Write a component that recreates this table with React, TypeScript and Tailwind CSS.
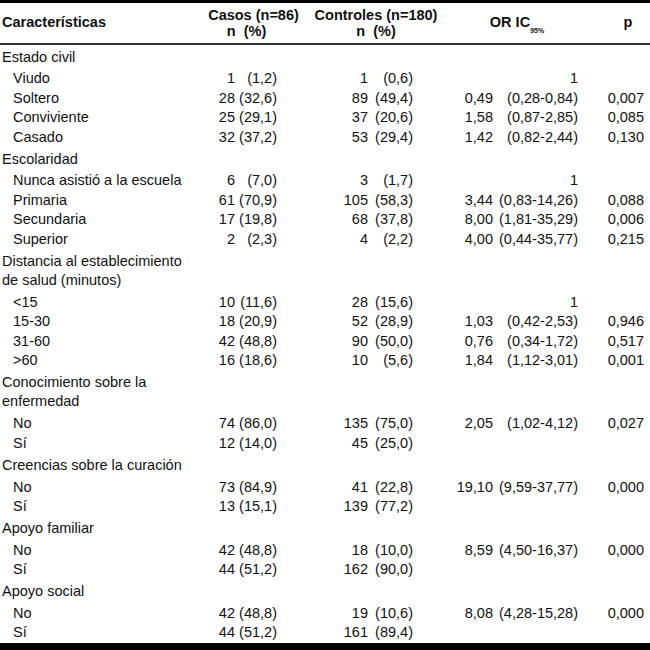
import React from "react";

type Row = [string, string, string, string, string, string, string, string];

const sections: { title: string[]; rows: Row[] }[] = [
  {
    title: ["Estado civil"],
    rows: [
      ["Viudo", "1", "(1,2)", "1", "(0,6)", "", "1", ""],
      ["Soltero", "28", "(32,6)", "89", "(49,4)", "0,49", "(0,28-0,84)", "0,007"],
      ["Conviviente", "25", "(29,1)", "37", "(20,6)", "1,58", "(0,87-2,85)", "0,085"],
      ["Casado", "32", "(37,2)", "53", "(29,4)", "1,42", "(0,82-2,44)", "0,130"],
    ],
  },
  {
    title: ["Escolaridad"],
    rows: [
      ["Nunca asistió a la escuela", "6", "(7,0)", "3", "(1,7)", "", "1", ""],
      ["Primaria", "61", "(70,9)", "105", "(58,3)", "3,44", "(0,83-14,26)", "0,088"],
      ["Secundaria", "17", "(19,8)", "68", "(37,8)", "8,00", "(1,81-35,29)", "0,006"],
      ["Superior", "2", "(2,3)", "4", "(2,2)", "4,00", "(0,44-35,77)", "0,215"],
    ],
  },
  {
    title: ["Distancia al establecimiento", "de salud (minutos)"],
    rows: [
      ["<15", "10", "(11,6)", "28", "(15,6)", "", "1", ""],
      ["15-30", "18", "(20,9)", "52", "(28,9)", "1,03", "(0,42-2,53)", "0,946"],
      ["31-60", "42", "(48,8)", "90", "(50,0)", "0,76", "(0,34-1,72)", "0,517"],
      [">60", "16", "(18,6)", "10", "(5,6)", "1,84", "(1,12-3,01)", "0,001"],
    ],
  },
  {
    title: ["Conocimiento sobre la", "enfermedad"],
    rows: [
      ["No", "74", "(86,0)", "135", "(75,0)", "2,05", "(1,02-4,12)", "0,027"],
      ["Sí", "12", "(14,0)", "45", "(25,0)", "", "", ""],
    ],
  },
  {
    title: ["Creencias sobre la curación"],
    rows: [
      ["No", "73", "(84,9)", "41", "(22,8)", "19,10", "(9,59-37,77)", "0,000"],
      ["Sí", "13", "(15,1)", "139", "(77,2)", "", "", ""],
    ],
  },
  {
    title: ["Apoyo familiar"],
    rows: [
      ["No", "42", "(48,8)", "18", "(10,0)", "8,59", "(4,50-16,37)", "0,000"],
      ["Sí", "44", "(51,2)", "162", "(90,0)", "", "", ""],
    ],
  },
  {
    title: ["Apoyo social"],
    rows: [
      ["No", "42", "(48,8)", "19", "(10,6)", "8,08", "(4,28-15,28)", "0,000"],
      ["Sí", "44", "(51,2)", "161", "(89,4)", "", "", ""],
    ],
  },
];

function DataRow({ r }: { r: Row }) {
  return (
    <div className="flex leading-[19.4px] whitespace-nowrap">
      <div className="w-[205px] pl-[13px]">{r[0]}</div>
      <div className="w-[30px] text-right">{r[1]}</div>
      <div className="w-[42px] text-right">{r[2]}</div>
      <div className="w-[91px] text-right">{r[3]}</div>
      <div className="w-[45px] text-right">{r[4]}</div>
      <div className="w-[80px] text-right">{r[5]}</div>
      <div className="w-[85px] text-right">{r[6]}</div>
      <div className="w-[66px] text-right">{r[7]}</div>
    </div>
  );
}

export default function App() {
  return (
    <div
      className="w-[650px] h-[650px] bg-white text-[#111] text-[14.5px] overflow-hidden"
      style={{ fontFamily: '"Liberation Sans", Arial, sans-serif' }}
    >
      <div className="border-t-[3px] border-b-[2px] border-t-black border-b-[#333] h-[45px] flex items-center font-bold">
        <div className="w-[205px] pl-[2px]">Características</div>
        <div className="w-[97px] text-center leading-[16.5px]">
          <div>Casos (n=86)</div>
          <div className="pr-[14px]">n&nbsp;&nbsp;(%)</div>
        </div>
        <div className="w-[148px] text-center leading-[16.5px]">
          <div>Controles (n=180)</div>
          <div>n&nbsp;&nbsp;(%)</div>
        </div>
        <div className="w-[134px] text-center">
          OR IC<sub className="text-[7px] align-[-4px]">95%</sub>
        </div>
        <div className="ml-[22px] w-[44px] text-center">p</div>
      </div>

      <div>
        {sections.map((s) => (
          <div key={s.title[0]}>
            <div className="py-[2.5px] pl-[2px] leading-[19.4px]">
              {s.title.map((t) => (
                <div key={t}>{t}</div>
              ))}
            </div>
            {s.rows.map((r, i) => (
              <DataRow key={i} r={r} />
            ))}
          </div>
        ))}
      </div>

      <div className="h-[8px] bg-black" />
    </div>
  );
}
